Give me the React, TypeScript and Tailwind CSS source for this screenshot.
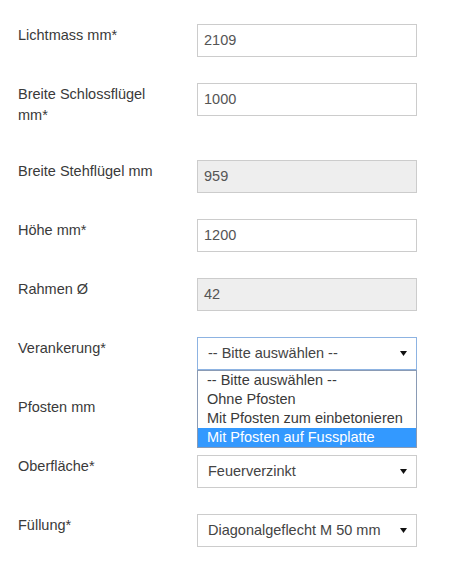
import React from "react";

const font = { fontFamily: '"Liberation Sans", Arial, sans-serif' };

function Arrow() {
  return (
    <svg width="7" height="5" viewBox="0 0 7 5" className="shrink-0">
      <polygon points="0,0 7,0 3.5,5" fill="#111" />
    </svg>
  );
}

function TextBox({ value, disabled }: { value: string; disabled?: boolean }) {
  return (
    <div
      className={`w-[220px] h-[33px] border border-[#cccccc] flex items-center pl-[6px] text-[14.5px] text-[#555555] ${
        disabled ? "bg-[#eeeeee]" : "bg-white"
      }`}
    >
      {value}
    </div>
  );
}

function SelectBox({ value, focused }: { value: string; focused?: boolean }) {
  return (
    <div
      className={`w-[220px] h-[33px] border bg-white flex items-center justify-between pl-[10px] pr-[9px] text-[14.5px] text-[#444444] ${
        focused ? "border-[#8db3e2]" : "border-[#cccccc]"
      }`}
    >
      <span>{value}</span>
      <Arrow />
    </div>
  );
}

function Row({
  label,
  children,
}: {
  label: string;
  children: React.ReactNode;
}) {
  return (
    <div className="flex items-start mb-[26px]">
      <div className="w-[179px] shrink-0">
        <div className="w-[150px] text-[14.5px] leading-[21px] text-[#3a3a3a] pt-[1px] pb-[8px]">
          {label}
        </div>
      </div>
      <div className="relative">{children}</div>
    </div>
  );
}

export default function App() {
  const options = [
    "-- Bitte auswählen --",
    "Ohne Pfosten",
    "Mit Pfosten zum einbetonieren",
    "Mit Pfosten auf Fussplatte",
  ];
  return (
    <div className="w-[460px] h-[564px] bg-white overflow-hidden pt-[24px] pl-[18px]" style={font}>
      <Row label="Lichtmass mm*">
        <TextBox value="2109" />
      </Row>
      <Row label="Breite Schlossflügel mm*">
        <TextBox value="1000" />
      </Row>
      <Row label="Breite Stehflügel mm">
        <TextBox value="959" disabled />
      </Row>
      <Row label="Höhe mm*">
        <TextBox value="1200" />
      </Row>
      <Row label="Rahmen Ø">
        <TextBox value="42" disabled />
      </Row>
      <div className="relative z-10">
        <Row label="Verankerung*">
          <SelectBox value="-- Bitte auswählen --" focused />
          <div className="absolute left-0 top-[33px] w-[220px] border border-[#8a9bb5] bg-white text-[14.5px]">
            {options.map((o, i) => (
              <div
                key={o}
                className={`h-[19px] leading-[19px] pl-[9px] whitespace-nowrap ${
                  i === 3 ? "bg-[#3399ff] text-white" : "text-[#3a3a3a]"
                }`}
              >
                {o}
              </div>
            ))}
          </div>
        </Row>
      </div>
      <Row label="Pfosten mm">
        <SelectBox value="" />
      </Row>
      <Row label="Oberfläche*">
        <SelectBox value="Feuerverzinkt" />
      </Row>
      <Row label="Füllung*">
        <SelectBox value="Diagonalgeflecht M 50 mm" />
      </Row>
    </div>
  );
}
